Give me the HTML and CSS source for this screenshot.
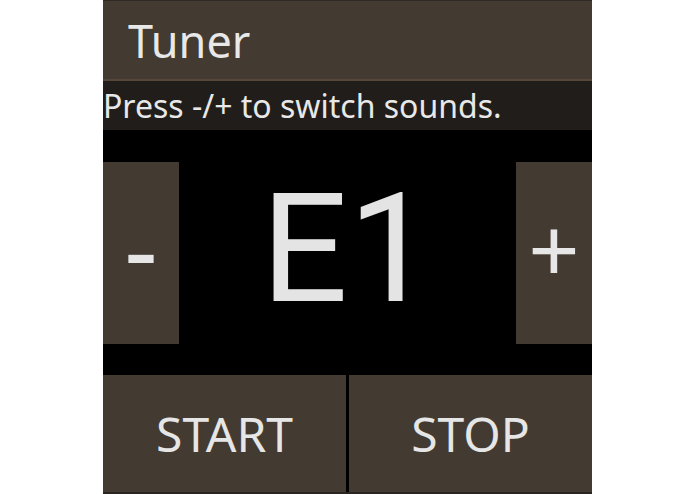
FILE: index.html
```html
<!DOCTYPE html>
<html lang="en">
<head>
  <meta charset="UTF-8">
  <meta name="viewport" content="width=device-width, initial-scale=1.0">
  <link rel="stylesheet" href="styles.css">
  <title>Tuner</title>
</head>
<body>

  <div class="app">
    <div class="titlebar">Tuner</div>
    <div class="message">Press -/+ to switch sounds.</div>

    <div class="tuner">
      <button class="step minus" data-step="-1">-</button>
      <div class="note" id="note">E1</div>
      <button class="step plus" data-step="1">+</button>
    </div>

    <div class="actions">
      <button class="action">START</button>
      <button class="action">STOP</button>
    </div>
  </div>

</body>
</html>
```

FILE: styles.css
```css
body {
  margin: 0;
  background: #fff;
  font-family: 'Noto Sans', sans-serif;
}

.app {
  width: 489px;
  height: 494px;
  margin-left: 103px;
  background: #000;
  display: flex;
  flex-direction: column;
}

.titlebar {
  height: 78px;
  border-top: 1px solid #2e2925;
  border-bottom: 2px solid #54473a;
  background: #433a31;
  color: #e8e8e8;
  font-size: 45px;
  line-height: 80px;
  padding-left: 25px;
}

.message {
  height: 49px;
  background: #201d1a;
  color: #e8e8e8;
  font-size: 32px;
  line-height: 49px;
  white-space: nowrap;
}

.tuner {
  height: 245px;
  display: flex;
  align-items: center;
  justify-content: space-between;
}

button {
  border: none;
  outline: none;
  cursor: pointer;
  padding: 0;
  background: #433a31;
  color: #e6e6e6;
  font-family: 'Noto Sans', sans-serif;
}

.step {
  width: 76px;
  height: 182px;
  line-height: 1;
}

.minus {
  font-size: 104px;
  padding-bottom: 12px;
}

.plus {
  font-size: 90px;
  padding-bottom: 10px;
}

.note {
  font-family: Roboto, sans-serif;
  font-size: 153px;
  line-height: 1;
  color: #e4e4e4;
  margin-top: -8px;
}

.actions {
  height: 117px;
  display: flex;
  gap: 3px;
  border-bottom: 2px solid #2a2622;
}

.action {
  flex: 1;
  font-size: 48px;
}
```
